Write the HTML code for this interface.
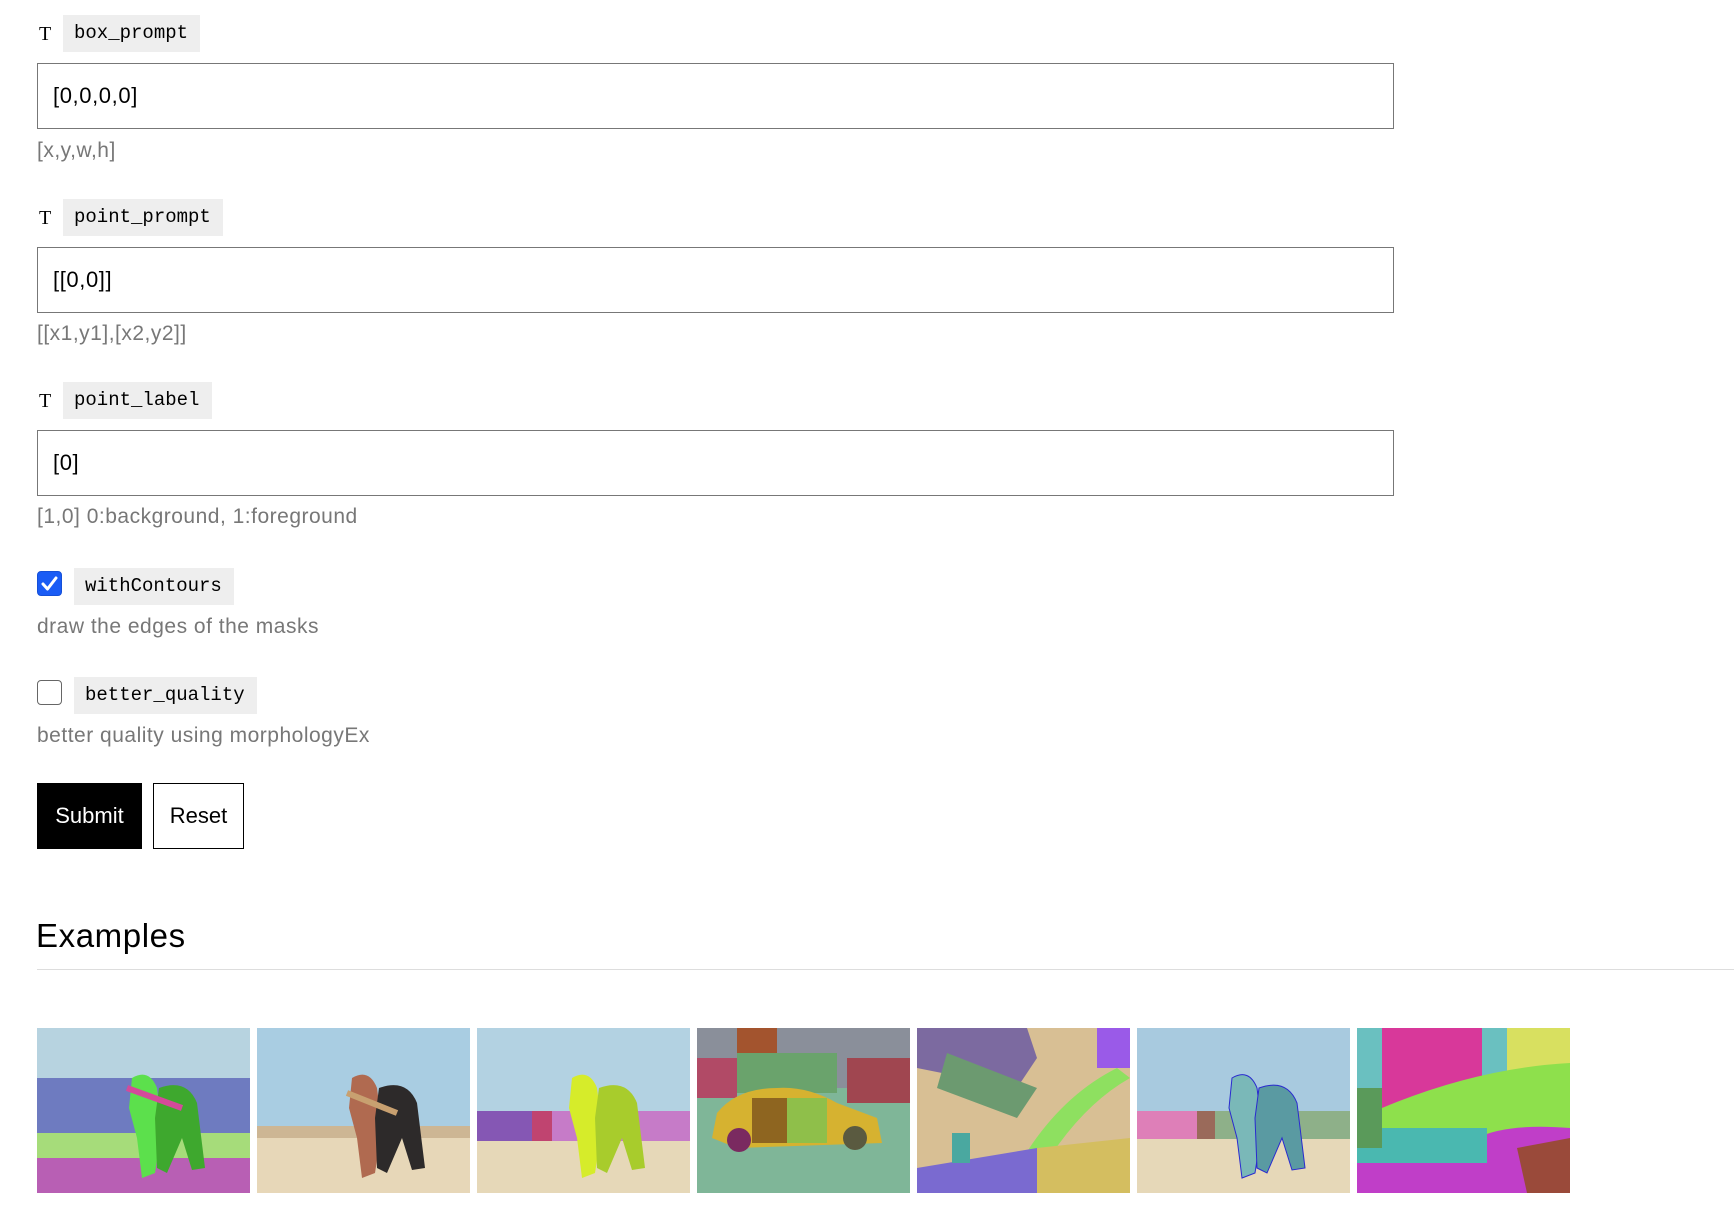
<!DOCTYPE html>
<html><head><meta charset="utf-8"><style>
*{margin:0;padding:0;box-sizing:border-box}
body{width:1734px;height:1220px;background:#fff;position:relative;overflow:hidden;font-family:"Liberation Sans",sans-serif;color:#000}
.a{position:absolute}
.T{font-family:"Liberation Serif",serif;font-size:20px;left:39px}
.tag{background:#eee;font-family:"Liberation Mono",monospace;font-size:19px;padding-left:11px;line-height:37px;height:37px}
.inp{left:37px;width:1357px;height:66px;border:1px solid #777;font-size:22px;line-height:64px;padding-left:15px;letter-spacing:0.6px}
.help{left:37px;font-size:21px;color:#777;line-height:24px;letter-spacing:0.5px}
.cb{left:37px;width:25px;height:25px;border-radius:4px}
.th{top:1028px;width:213px;height:165px}
</style></head><body>
<div class="a T" style="top:23px">T</div>
<div class="a tag" style="left:63px;top:15px;width:137px">box_prompt</div>
<div class="a inp" style="top:63px">[0,0,0,0]</div>
<div class="a help" style="top:139px">[x,y,w,h]</div>

<div class="a T" style="top:207px">T</div>
<div class="a tag" style="left:63px;top:199px;width:160px">point_prompt</div>
<div class="a inp" style="top:247px">[[0,0]]</div>
<div class="a help" style="top:322px">[[x1,y1],[x2,y2]]</div>

<div class="a T" style="top:390px">T</div>
<div class="a tag" style="left:63px;top:382px;width:149px">point_label</div>
<div class="a inp" style="top:430px">[0]</div>
<div class="a help" style="top:505px">[1,0] 0:background, 1:foreground</div>

<div class="a cb" style="top:571px;background:#1a5cf5;border:1px solid #1550d8"><svg width="23" height="23" viewBox="0 0 23 23"><path d="M5 12 L9.5 17 L18 6" stroke="#fff" stroke-width="3" fill="none" stroke-linecap="round" stroke-linejoin="round"/></svg></div>
<div class="a tag" style="left:74px;top:568px;width:160px">withContours</div>
<div class="a help" style="top:615px">draw the edges of the masks</div>

<div class="a cb" style="top:680px;border:1.5px solid #666"></div>
<div class="a tag" style="left:74px;top:677px;width:183px">better_quality</div>
<div class="a help" style="top:724px">better quality using morphologyEx</div>

<div class="a" style="left:37px;top:783px;width:105px;height:66px;background:#000;color:#fff;font-size:22px;line-height:66px;text-align:center">Submit</div>
<div class="a" style="left:153px;top:783px;width:91px;height:66px;border:1.5px solid #000;font-size:22px;line-height:63px;text-align:center">Reset</div>

<div class="a" style="left:36px;top:916px;font-size:33px;line-height:40px;letter-spacing:0.6px">Examples</div>
<div class="a" style="left:37px;top:969px;width:1697px;height:1px;background:#ddd"></div>

<svg class="a th" style="left:37px" viewBox="0 0 213 165"><rect width="213" height="165" fill="#b7d3e0"/><rect y="50" width="213" height="55" fill="#6e7bc0"/><rect y="105" width="213" height="25" fill="#a6dc7a"/><rect y="130" width="213" height="35" fill="#b85fb4"/><path d="M95 50 Q112 40 120 60 L125 100 L118 145 L105 150 L100 110 L92 80 Z" fill="#5ce04c"/><path d="M122 60 Q150 50 160 75 L168 140 L155 142 L145 110 L130 145 L120 140 L118 90 Z" fill="#3ea82e"/><path d="M90 60 L145 80" stroke="#d44a9a" stroke-width="6"/></svg>
<svg class="a th" style="left:257px" viewBox="0 0 213 165"><rect width="213" height="165" fill="#a9cde2"/><rect y="100" width="213" height="65" fill="#e7d7b8"/><rect y="98" width="213" height="12" fill="#cdb694"/><path d="M95 50 Q112 40 120 60 L125 100 L118 145 L105 150 L100 110 L92 80 Z" fill="#b06a50"/><path d="M122 60 Q150 50 160 75 L168 140 L155 142 L145 110 L130 145 L120 140 L118 90 Z" fill="#2d2a2a"/><path d="M90 65 L140 85" stroke="#c8a070" stroke-width="6"/></svg>
<svg class="a th" style="left:477px" viewBox="0 0 213 165"><rect width="213" height="165" fill="#b3d2e2"/><rect y="110" width="213" height="55" fill="#e6d8b8"/><rect y="83" width="213" height="30" fill="#c67bc8"/><rect y="83" width="55" height="30" fill="#8557b4"/><rect x="55" y="83" width="20" height="30" fill="#c04470"/><path d="M95 50 Q112 40 120 60 L125 100 L118 145 L105 150 L100 110 L92 80 Z" fill="#d6ec2a"/><path d="M122 60 Q150 50 160 75 L168 140 L155 142 L145 110 L130 145 L120 140 L118 90 Z" fill="#a8cc2c"/></svg>
<svg class="a th" style="left:697px" viewBox="0 0 213 165"><rect width="213" height="165" fill="#7fb698"/><rect width="213" height="60" fill="#8a8f9a"/><rect x="40" y="25" width="100" height="40" fill="#6aa36c"/><rect x="0" y="30" width="40" height="40" fill="#b14a66"/><rect x="150" y="30" width="63" height="45" fill="#a04650"/><rect x="40" y="0" width="40" height="25" fill="#a3542e"/><path d="M20 85 Q40 60 80 60 Q110 58 140 75 L180 90 L185 115 L40 120 L15 110 Z" fill="#d6b230"/><rect x="90" y="70" width="40" height="45" fill="#8fbf4a"/><rect x="55" y="70" width="35" height="45" fill="#8e6520"/><circle cx="42" cy="112" r="12" fill="#7a2a60"/><circle cx="158" cy="110" r="12" fill="#5a5a40"/></svg>
<svg class="a th" style="left:917px" viewBox="0 0 213 165"><rect width="213" height="165" fill="#d8bf94"/><path d="M0 0 H110 L120 30 L100 60 L0 40 Z" fill="#7c6aa0"/><path d="M30 25 L120 60 L100 90 L20 60 Z" fill="#6c9a70"/><path d="M100 140 Q140 70 200 40 L213 50 Q160 80 120 150 Z" fill="#8ee060"/><path d="M0 140 L120 120 L120 165 L0 165 Z" fill="#7a6ad0"/><path d="M120 120 L213 110 L213 165 L120 165 Z" fill="#d4be60"/><rect x="180" y="0" width="33" height="40" fill="#9a5ae8"/><rect x="35" y="105" width="18" height="30" fill="#4aa8a0"/></svg>
<svg class="a th" style="left:1137px" viewBox="0 0 213 165"><rect width="213" height="165" fill="#a8cadf"/><rect y="110" width="213" height="55" fill="#e6d8b8"/><rect y="83" width="213" height="28" fill="#8eb089"/><rect y="83" width="60" height="28" fill="#de7fb8"/><rect x="60" y="83" width="18" height="28" fill="#9a6a5a"/><path d="M95 50 Q112 40 120 60 L125 100 L118 145 L105 150 L100 110 L92 80 Z" fill="#7ab8b8" stroke="#2a2ad0"/><path d="M122 60 Q150 50 160 75 L168 140 L155 142 L145 110 L130 145 L120 140 L118 90 Z" fill="#5a9aa2" stroke="#2a2ad0"/></svg>
<svg class="a th" style="left:1357px" viewBox="0 0 213 165"><rect width="213" height="165" fill="#c03ec8"/><rect width="213" height="60" fill="#6ac0c0"/><rect x="25" y="0" width="100" height="95" fill="#d8389a"/><rect x="150" y="0" width="63" height="55" fill="#d8e060"/><path d="M25 80 Q120 40 213 35 L213 100 Q150 95 120 110 Q60 120 25 120 Z" fill="#8ee04c"/><rect x="0" y="100" width="130" height="35" fill="#4ab8b0"/><path d="M160 120 L213 110 L213 165 L170 165 Z" fill="#9a4a3a"/><rect x="0" y="60" width="25" height="60" fill="#5a9a5a"/></svg>
</body></html>
